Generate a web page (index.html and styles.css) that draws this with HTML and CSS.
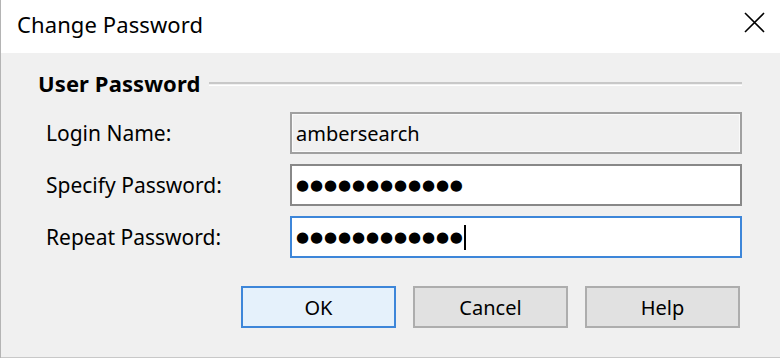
FILE: index.html
```html
<!DOCTYPE html>
<html lang="en">
<head>
  <meta charset="UTF-8">
  <title>Change Password</title>
  <link rel="stylesheet" href="styles.css">
</head>
<body>

  <div class="dialog">
    <div class="title-bar">
      <span class="title">Change Password</span>
      <svg class="close" width="21" height="21" viewBox="0 0 21 21">
        <path d="M1 1 L20 20 M20 1 L1 20" stroke="#000" stroke-width="1.6" fill="none"/>
      </svg>
    </div>

    <div class="content">
      <div class="group-head">
        <span class="group-title">User Password</span>
        <span class="group-line"></span>
      </div>

      <div class="form">
        <div class="row">
          <label class="label">Login Name:</label>
          <div class="field readonly">ambersearch</div>
        </div>
        <div class="row">
          <label class="label">Specify Password:</label>
          <div class="field"><span class="dots">●●●●●●●●●●●●</span></div>
        </div>
        <div class="row">
          <label class="label">Repeat Password:</label>
          <div class="field focused"><span class="dots">●●●●●●●●●●●●</span><span class="caret"></span></div>
        </div>
      </div>

      <div class="buttons">
        <button class="btn default">OK</button>
        <button class="btn">Cancel</button>
        <button class="btn">Help</button>
      </div>
    </div>
  </div>

</body>
</html>
```

FILE: styles.css
```css
body {
  margin: 0;
  font-family: 'Noto Sans', 'Open Sans', sans-serif;
  color: #000;
  background: #fff;
}
.dialog {
  width: 780px;
  height: 358px;
  display: flex;
  flex-direction: column;
  box-sizing: border-box;
  border-left: 1px solid #b4b4b4;
}
.title-bar {
  height: 53px;
  background: #fff;
  display: flex;
  align-items: center;
  justify-content: space-between;
  padding: 0 15px 0 16px;
}
.title {
  font-size: 22px;
  line-height: 26px;
  margin-top: -5px;
  letter-spacing: 0.1px;
}
.close {
  display: block;
  margin-top: -9px;
}
.content {
  flex: 1;
  background: #f0f0f0;
  border-bottom: 1px solid #c8c8c8;
  padding: 20px 38px 0 37px;
}
.group-head {
  display: flex;
  align-items: center;
  gap: 9px;
  height: 20px;
}
.group-title {
  font-weight: bold;
  font-size: 22px;
  line-height: 20px;
  letter-spacing: 0.1px;
}
.group-line {
  flex: 1;
  height: 1px;
  border-top: 2px solid #c8c8c8;
  border-bottom: 1px solid #fff;
  margin-top: 1px;
}
.form {
  margin-top: 19px;
  display: flex;
  flex-direction: column;
  gap: 10px;
}
.row {
  display: flex;
  align-items: center;
  padding-left: 8px;
}
.label {
  width: 244px;
  font-size: 21px;
}
.field {
  flex: 1;
  height: 42px;
  box-sizing: border-box;
  border: 2px solid #888;
  background: #fff;
  padding: 0 4px;
  display: flex;
  align-items: center;
  font-size: 20px;
}
.field.readonly {
  background: #f0f0f0;
  border-color: #a0a0a0;
  box-shadow: inset 0 0 0 1px #fafafa;
}
.field.focused {
  border-color: #3d86d9;
}
.dots {
  font-family: 'DejaVu Sans', sans-serif;
  font-size: 15px;
  letter-spacing: 0.9px;
}
.caret {
  width: 2px;
  height: 25px;
  background: #000;
  margin-left: 0;
}
.buttons {
  margin-top: 28px;
  display: flex;
  justify-content: flex-end;
  gap: 17px;
  padding-right: 2px;
}
.btn {
  width: 155px;
  height: 42px;
  box-sizing: border-box;
  font-family: inherit;
  font-size: 20px;
  color: #000;
  background: #e1e1e1;
  border: 2px solid #adadad;
  padding: 0;
}
.btn.default {
  background: #e5f1fb;
  border-color: #3d86d9;
}
```
